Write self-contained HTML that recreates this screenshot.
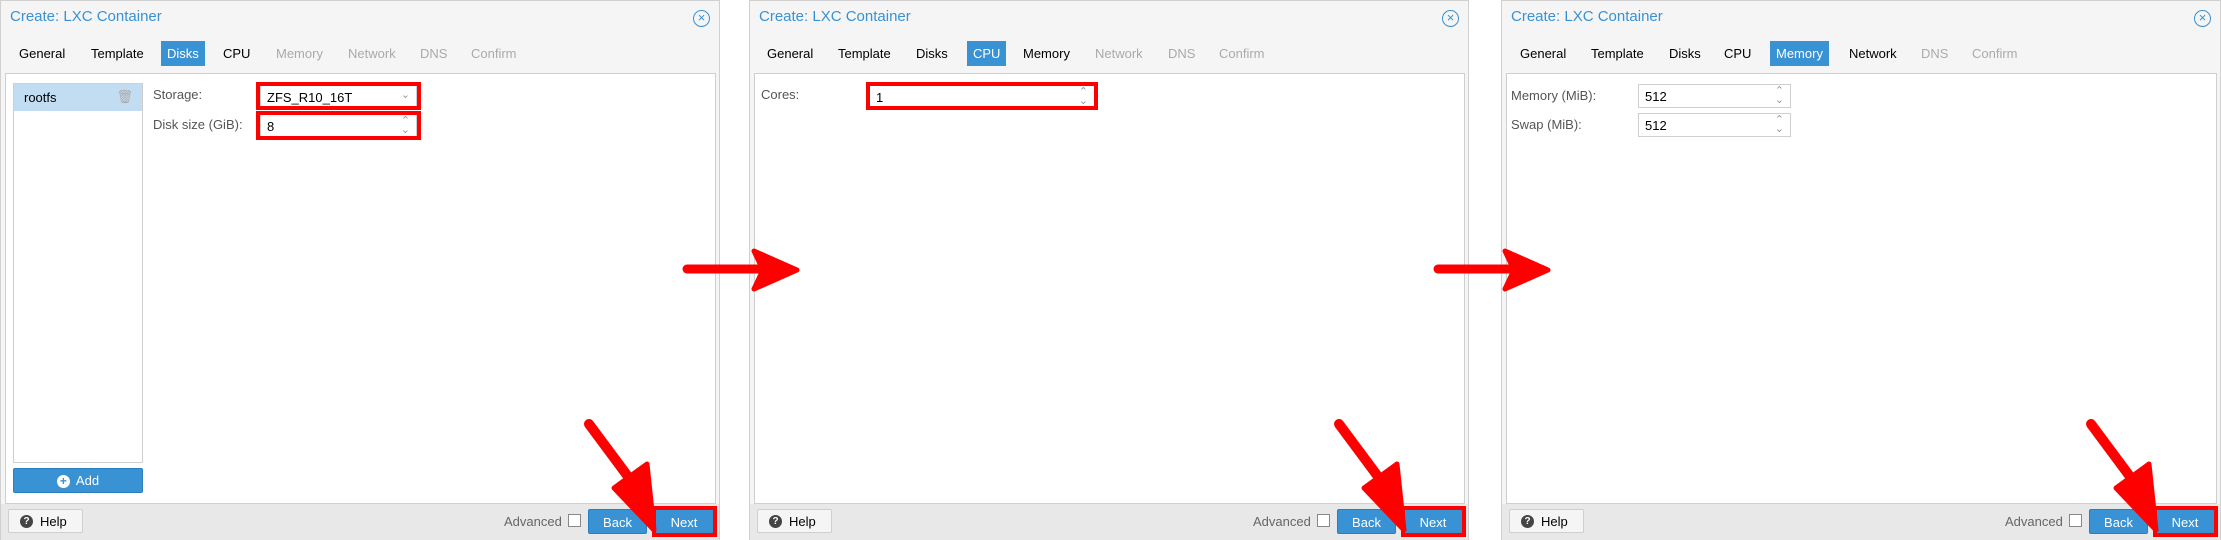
<!DOCTYPE html>
<html><head><meta charset="utf-8"><style>
*{box-sizing:border-box;margin:0;padding:0}
body{width:2221px;height:540px;background:#fff;position:relative;overflow:hidden;font-family:"Liberation Sans",sans-serif;font-size:13px;color:#000}
.p{position:absolute;top:0;width:720px;height:540px;background:#f5f5f5;border:1px solid #d0d0d0}
.t{position:absolute;left:9px;top:7px;font-size:15px;color:#3892d4}
.x{position:absolute;left:692px;top:9px;width:17px;height:17px;border:1.3px solid #3892d4;border-radius:50%;color:#3892d4;font-size:13px;line-height:14px;text-align:center}
.tab{position:absolute;top:44px;line-height:17px}
.g{color:#aaa}
.on{background:#3892d4;color:#fff;padding:4px 6px;margin-left:-6px;top:40px}
.b{position:absolute;left:4px;top:72px;width:711px;height:431px;background:#fff;border:1px solid #cfcfcf}
.f{position:absolute;left:0;top:503px;width:718px;height:36px;background:#e8e8e8}
.lab{position:absolute;color:#555}
.in{position:absolute;height:24px;border:1px solid #cfcfcf;background:#fff;padding:4px 6px}
.sp{position:absolute;right:6px;top:2px;color:#999;font-size:11px;line-height:9px}
.red{position:absolute;border:4px solid #f00}
.btn{position:absolute;background:#3892d4;color:#fff;text-align:center;border:1px solid #2a7fc0;border-radius:2px}
.help{position:absolute;left:7px;top:508px;width:75px;height:24px;background:#f5f5f5;border:1px solid #cfcfcf;border-radius:2px;padding:4px 0 0 31px}
.help:before{content:"?";position:absolute;left:11px;top:5px;width:13px;height:13px;border-radius:50%;background:#444;color:#fff;font-size:10px;font-weight:bold;line-height:13px;text-align:center}
.adv{position:absolute;left:503px;top:513px;color:#666}
.cb{position:absolute;left:567px;top:513px;width:13px;height:13px;border:1px solid #888;background:#fff}
</style></head><body>

<!-- Panel 1 -->
<div class="p" style="left:0">
<div class="t">Create: LXC Container</div><div class="x">×</div>
<div class="tab" style="left:18px">General</div>
<div class="tab" style="left:90px">Template</div>
<div class="tab on" style="left:166px">Disks</div>
<div class="tab" style="left:222px">CPU</div>
<div class="tab g" style="left:275px">Memory</div>
<div class="tab g" style="left:347px">Network</div>
<div class="tab g" style="left:419px">DNS</div>
<div class="tab g" style="left:470px">Confirm</div>
<div class="b"></div>
<div style="position:absolute;left:12px;top:82px;width:130px;height:380px;border:1px solid #cfcfcf;background:#fff"></div>
<div style="position:absolute;left:13px;top:83px;width:128px;height:27px;background:#c2ddf2;padding:6px 10px">rootfs<span style="position:absolute;right:9px;top:5px;color:#aaa">🗑</span></div>
<div class="btn" style="left:12px;top:467px;width:130px;height:25px;padding-top:4px"><span style="display:inline-block;width:13px;height:13px;border-radius:50%;background:#fff;color:#3892d4;font-weight:bold;font-size:12px;line-height:13px;margin-right:6px">+</span>Add</div>
<div class="lab" style="left:152px;top:86px">Storage:</div>
<div class="lab" style="left:152px;top:116px">Disk size (GiB):</div>
<div class="in" style="left:259px;top:84px;width:157px">ZFS_R10_16T<span class="sp" style="top:5px">⌄</span></div>
<div class="in" style="left:259px;top:113px;width:157px">8<span class="sp">⌃<br>⌄</span></div>
<div class="red" style="left:255px;top:81px;width:165px;height:28px"></div>
<div class="red" style="left:255px;top:110px;width:165px;height:29px"></div>
<div class="f"></div>
<div class="help">Help</div>
<div class="adv">Advanced</div><div class="cb"></div>
<div class="btn" style="left:587px;top:508px;width:59px;height:25px;padding-top:5px">Back</div>
<div class="btn" style="left:653px;top:508px;width:60px;height:25px;padding-top:5px">Next</div>
<div class="red" style="left:651px;top:505px;width:65px;height:31px"></div>
</div>

<!-- Panel 2 -->
<div class="p" style="left:749px">
<div class="t">Create: LXC Container</div><div class="x">×</div>
<div class="tab" style="left:17px">General</div>
<div class="tab" style="left:88px">Template</div>
<div class="tab" style="left:166px">Disks</div>
<div class="tab on" style="left:223px">CPU</div>
<div class="tab" style="left:273px">Memory</div>
<div class="tab g" style="left:345px">Network</div>
<div class="tab g" style="left:418px">DNS</div>
<div class="tab g" style="left:469px">Confirm</div>
<div class="b"></div>
<div class="lab" style="left:11px;top:86px">Cores:</div>
<div class="in" style="left:119px;top:84px;width:226px">1<span class="sp">⌃<br>⌄</span></div>
<div class="red" style="left:116px;top:81px;width:232px;height:28px"></div>
<div class="f"></div>
<div class="help">Help</div>
<div class="adv">Advanced</div><div class="cb"></div>
<div class="btn" style="left:587px;top:508px;width:59px;height:25px;padding-top:5px">Back</div>
<div class="btn" style="left:653px;top:508px;width:60px;height:25px;padding-top:5px">Next</div>
<div class="red" style="left:651px;top:505px;width:65px;height:31px"></div>
</div>

<!-- Panel 3 -->
<div class="p" style="left:1501px">
<div class="t">Create: LXC Container</div><div class="x">×</div>
<div class="tab" style="left:18px">General</div>
<div class="tab" style="left:89px">Template</div>
<div class="tab" style="left:167px">Disks</div>
<div class="tab" style="left:222px">CPU</div>
<div class="tab on" style="left:274px">Memory</div>
<div class="tab" style="left:347px">Network</div>
<div class="tab g" style="left:419px">DNS</div>
<div class="tab g" style="left:470px">Confirm</div>
<div class="b"></div>
<div class="lab" style="left:9px;top:87px">Memory (MiB):</div>
<div class="lab" style="left:9px;top:116px">Swap (MiB):</div>
<div class="in" style="left:136px;top:83px;width:153px">512<span class="sp">⌃<br>⌄</span></div>
<div class="in" style="left:136px;top:112px;width:153px">512<span class="sp">⌃<br>⌄</span></div>
<div class="f"></div>
<div class="help">Help</div>
<div class="adv">Advanced</div><div class="cb"></div>
<div class="btn" style="left:587px;top:508px;width:59px;height:25px;padding-top:5px">Back</div>
<div class="btn" style="left:653px;top:508px;width:60px;height:25px;padding-top:5px">Next</div>
<div class="red" style="left:651px;top:505px;width:65px;height:31px"></div>
</div>

<!-- arrows -->
<svg width="2221" height="540" style="position:absolute;left:0;top:0" xmlns="http://www.w3.org/2000/svg">
<g fill="#f00" stroke="#f00" stroke-linejoin="round" stroke-linecap="round">
<line x1="687" y1="269" x2="765" y2="269" stroke-width="9"/>
<polygon points="754,251 797,270 754,289 763,270" stroke-width="5"/>
<line x1="1438" y1="269" x2="1516" y2="269" stroke-width="9"/>
<polygon points="1505,251 1548,270 1505,289 1514,270" stroke-width="5"/>
<g><line x1="589" y1="424" x2="638" y2="490" stroke-width="10"/>
<polygon points="614,488 647,464 654,530" stroke-width="5"/></g>
<g transform="translate(750,0)"><line x1="589" y1="424" x2="638" y2="490" stroke-width="10"/>
<polygon points="614,488 647,464 654,530" stroke-width="5"/></g>
<g transform="translate(1502,0)"><line x1="589" y1="424" x2="638" y2="490" stroke-width="10"/>
<polygon points="614,488 647,464 654,530" stroke-width="5"/></g>
</g></svg>
</body></html>
